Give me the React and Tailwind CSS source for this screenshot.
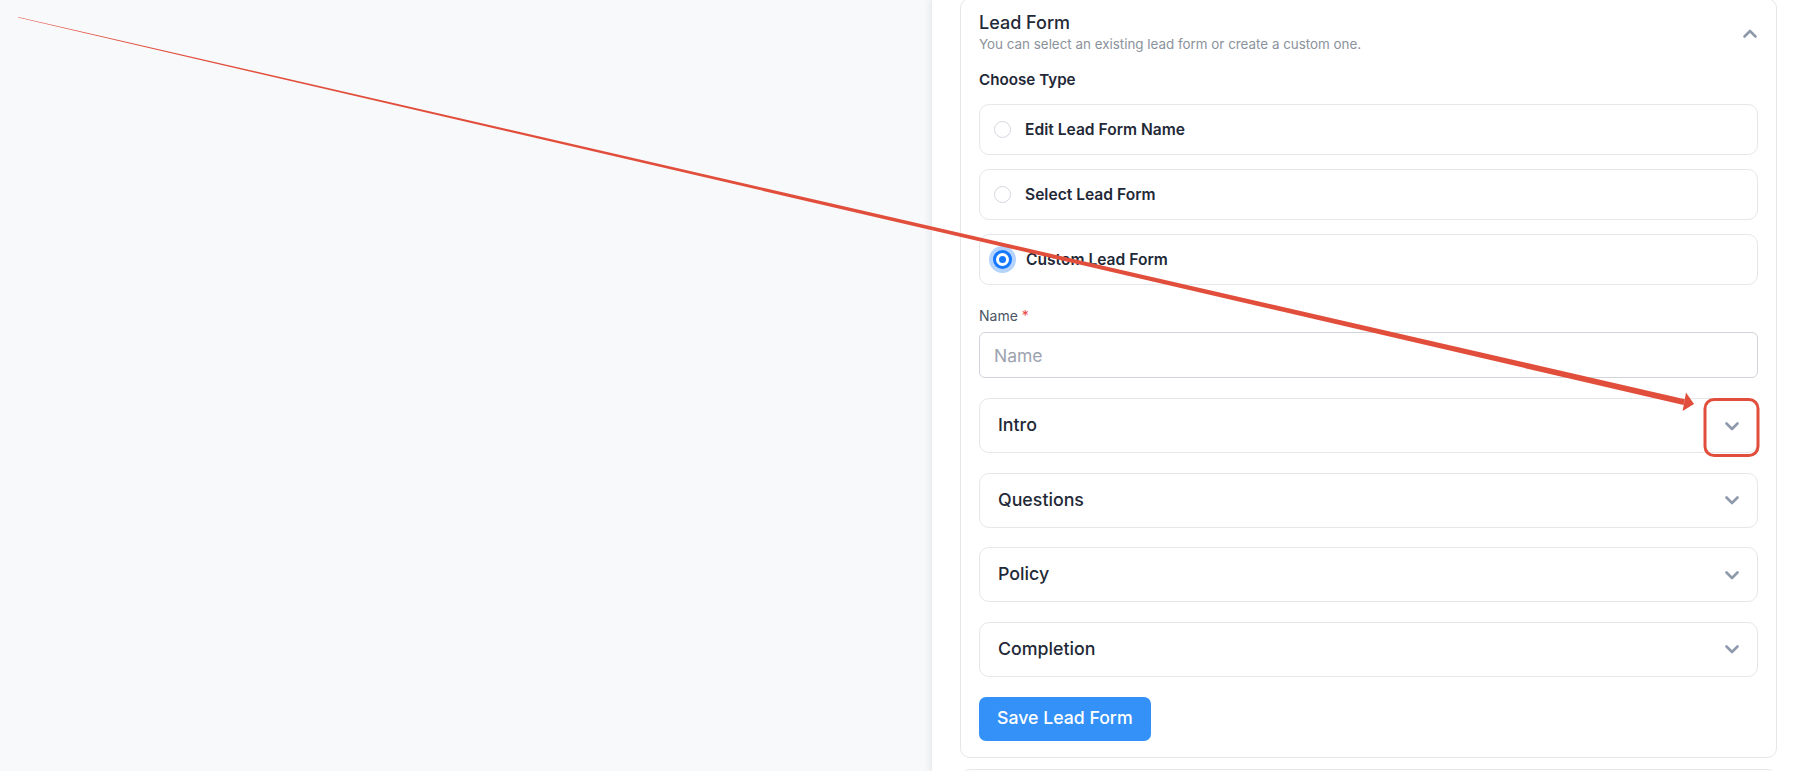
import React, { useState } from "react";

const Chevron = ({ up = false }) => (
  <svg width="16" height="10" viewBox="0 0 16 10" fill="none" className="shrink-0">
    <path
      d={up ? "M2.5 7.5l5.5-5.5 5.5 5.5" : "M2.5 2.5l5.5 5.5 5.5-5.5"}
      stroke="#8e9aab"
      strokeWidth="2.6"
      strokeLinecap="round"
      strokeLinejoin="round"
    />
  </svg>
);

const typeOptions = [
  { id: "edit", label: "Edit Lead Form Name" },
  { id: "select", label: "Select Lead Form" },
  { id: "custom", label: "Custom Lead Form" },
];

const sections = ["Intro", "Questions", "Policy", "Completion"];

const Radio = ({ checked }) =>
  checked ? (
    <span className="-ml-[1px] flex h-[19px] w-[19px] shrink-0 items-center justify-center rounded-full border-[3px] border-[#1677ff] bg-white ring-4 ring-[#b5d4fd]">
      <span className="h-[7px] w-[7px] rounded-full bg-[#1677ff]" />
    </span>
  ) : (
    <span className="h-[17px] w-[17px] shrink-0 rounded-full border border-[#d4d8de] bg-white" />
  );

export default function App() {
  const [type, setType] = useState("custom");
  const [name, setName] = useState("");

  return (
    <div className="relative flex h-[771px] w-full overflow-hidden bg-[#f8f9fb] font-['Inter',sans-serif]">
      {/* left canvas */}
      <div className="w-[931px] shrink-0" />

      {/* right panel */}
      <div className="flex-1 border-l border-[#e9ebef] bg-white pl-[28px] pr-[21px] shadow-[-3px_0_6px_rgba(15,23,42,0.05)]">
        <div className="-mt-[2px] rounded-[10px] border border-[#e5e7eb] px-[18px] pt-[12px] pb-[16px]">
          {/* header */}
          <div className="flex items-center justify-between">
            <div>
              <div className="text-[18px] leading-[24px] font-medium text-[#1f2937]">Lead Form</div>
              <div className="text-[13.4px] leading-[18px] text-[#8b929c]">
                You can select an existing lead form or create a custom one.
              </div>
            </div>
            <div className="mt-[4px]">
              <Chevron up />
            </div>
          </div>

          <div className="mt-[16px] text-[15.2px] leading-[22px] font-semibold text-[#1f2937]">Choose Type</div>

          <div className="mt-[13px] flex flex-col gap-[14px]">
            {typeOptions.map((opt) => (
              <label
                key={opt.id}
                onClick={() => setType(opt.id)}
                className="flex h-[51px] cursor-pointer items-center gap-[14px] rounded-[10px] border border-[#e5e7eb] pl-[14px]"
              >
                <Radio checked={type === opt.id} />
                <span className="text-[15.6px] font-semibold text-[#1f2937]">{opt.label}</span>
              </label>
            ))}
          </div>

          <div className="mt-[21px] text-[14px] leading-[20px] text-[#4b5563]">
            Name <span className="text-[#ef4444]">*</span>
          </div>
          <input
            type="text"
            placeholder="Name"
            value={name}
            onChange={(e) => setName(e.target.value)}
            className="mt-[6px] block h-[46px] w-full rounded-[6px] border border-[#d1d5db] px-[14px] text-[17.5px] text-[#1f2937] outline-none placeholder:text-[#9ca3af]"
          />

          <div className="mt-[20px] flex flex-col gap-[19.5px]">
            {sections.map((s) => (
              <div
                key={s}
                className="flex h-[55px] items-center justify-between rounded-[10px] border border-[#e5e7eb] pl-[18px] pr-[17px]"
              >
                <span className="text-[17.8px] font-medium text-[#1f2937]">{s}</span>
                <Chevron />
              </div>
            ))}
          </div>

          <button className="mt-[20px] h-[44px] rounded-[7px] bg-[#3391f8] px-[18px] text-[17.7px] font-medium text-white">
            Save Lead Form
          </button>
        </div>

        <div className="mt-[11px] h-[60px] rounded-[10px] border border-[#e5e7eb]" />
      </div>

      {/* annotation */}
      <svg className="pointer-events-none absolute inset-0" width="1798" height="771" viewBox="0 0 1798 771">
        <polygon points="18,17 1684.9,399.2 1683.5,405 18,17.6" fill="#e14f3c" />
        <polygon points="1686,392.5 1694,404 1682.6,411" fill="#e14f3c" />
        <rect x="1705" y="399.5" width="53" height="56" rx="9" fill="none" stroke="#e14f3c" strokeWidth="3" />
      </svg>
    </div>
  );
}
